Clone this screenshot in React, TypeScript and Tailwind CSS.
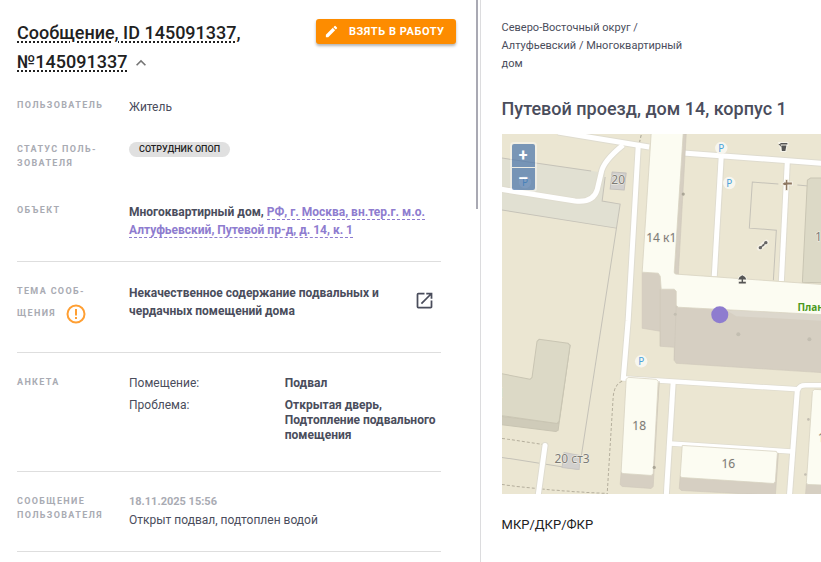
import type { ReactNode } from "react";
import { MdEdit, MdKeyboardArrowUp, MdOpenInNew } from "react-icons/md";

interface RowProps {
    label: ReactNode;
    children: ReactNode;
    className?: string;
}

function Row({ label, children, className = "" }: RowProps) {
    return (
        <div className={`grid grid-cols-[88px_1fr] gap-x-6 ${className}`}>
            <dt className="text-[9px] leading-[14px] font-bold uppercase tracking-[0.15em] text-[#a9abb3]">{label}</dt>
            <dd className="min-w-0">{children}</dd>
        </div>
    );
}

function WarningIcon() {
    return (
        <svg viewBox="0 0 20 20" className="my-1.5 ml-2.5 inline-block h-5 w-5 align-middle" fill="none" stroke="#ff9f33" strokeWidth="2" aria-hidden="true">
            <circle cx="10" cy="10" r="8.500" />
            <path d="M10 5V11.500M10 13V15" />
        </svg>
    );
}

const parkings = [
    [219, 14],
    [227, 49],
    [139, 227],
    [23, 48],
];

const mapLabels = [
    { x: 116, y: 50, text: "20" },
    { x: 159, y: 108, text: "14 к1" },
    { x: 137, y: 296, text: "18" },
    { x: 226, y: 334, text: "16" },
    { x: 70, y: 329, text: "20 ст3" },
    { x: 316, y: 107, text: "1" },
    { x: 319, y: 308, text: "1" },
    { x: -1, y: 263, text: "1" },
];

function MapCanvas() {
    return (
        <svg viewBox="0 0 319 360" preserveAspectRatio="xMinYMin slice" className="block h-full w-full" role="img" aria-label="Карта">
            <rect width="900" height="600" fill="#ebe6d2" />
            <path d="M0 24L90 37L103 39L100 67L118 70L114 94L0 76Z" fill="#e1e0d2" />

            {/* fences */}
            <g fill="none" stroke="#c5c2b8" strokeWidth="1">
                <path d="M0 24L89 37" />
                <path d="M103 43L100 67L118 70L79 323" />
                <path d="M0 76L114 94" />
                <path d="M0 323L77 335" />
                <path d="M276 50L250 48L247 94L274 96L271 146" />
                <path d="M295 51L306 52" />
                <path d="M139 1L137 10" strokeDasharray="3 2" stroke="#a9a595" />
            </g>

            {/* footpaths */}
            <g fill="none" stroke="#b5af9d" strokeWidth="1" strokeDasharray="3 2">
                <path d="M0 304L41 310" />
                <path d="M0 350C20 353 60 357 105 359" />
                <path d="M120 247Q112 250 111 263L105 360" />
            </g>

            {/* roads: grey casing under white */}
            <g fill="none" stroke="#dfdccf" strokeLinejoin="round">
                <path d="M56 -2L147 13" strokeWidth="7" />
                <path d="M-2 55L73 67Q91 69 95 56L99 39Q101 27 121 11" strokeWidth="7" />
                <path d="M136 14L126 186L121 246" strokeWidth="7" />
                <path d="M121 244L296 255Q297 251 303 251L330 251" strokeWidth="6" />
                <path d="M171 249L164 362" strokeWidth="7" />
                <path d="M295 256L287 362" strokeWidth="7" />
                <path d="M168 309L289 317" strokeWidth="6" />
                <path d="M43 311L36 362" strokeWidth="7" strokeLinecap="round" />
                <path d="M181 19L330 30" strokeWidth="7" />
                <path d="M219 23L212 142" strokeWidth="7" />
                <path d="M285 28L279 147" strokeWidth="7" />
            </g>
            <g fill="none" stroke="#fff" strokeLinejoin="round">
                <path d="M56 -2L147 13" strokeWidth="5" />
                <path d="M-2 55L73 67Q91 69 95 56L99 39Q101 27 121 11" strokeWidth="5" />
                <path d="M136 13L126 186L121 246" strokeWidth="5" />
                <path d="M120 244L296 255Q297 251 303 251L330 251" strokeWidth="4.500" />
                <path d="M171 247L164 362" strokeWidth="5" />
                <path d="M295 255L287 362" strokeWidth="5" />
                <path d="M168 309L289 317" strokeWidth="4.500" />
                <path d="M43 311L36 362" strokeWidth="5" strokeLinecap="round" />
                <path d="M181 19L330 30" strokeWidth="5" />
                <path d="M219 21L212 142" strokeWidth="5" />
                <path d="M285 26L279 147" strokeWidth="5" />
            </g>

            {/* building shadows */}
            <g fill="#d6cfc2" stroke="#cfc8ba" strokeWidth="0.6" strokeLinejoin="round">
                <path d="M140 138L158 138L174 150L330 170L330 239L174 229L172 226L172 213L158 212L158 197L140 194Z" />
                <path d="M180 0L184 0L176 142L172 141Z" />
                <path d="M119 337L118 350L120 352L149 354L151 352L157 247L150 341Z" />
                <path d="M178 341L177 354L179 356L273 361L276 319Z" />
                <path d="M304 349L303 362L330 362L330 350Z" />
            </g>
            <path d="M158 155L158 212M174 171L172 226" stroke="#cdc6b8" strokeWidth="0.6" />
            <path d="M224 176L234 182L330 187L330 178Z" fill="#dcd7cc" />

            {/* residential buildings */}
            <g fill="#fcfcf2" stroke="#d8d3c2" strokeWidth="0.8" strokeLinejoin="round">
                <path d="M149 -1L181 -1L172 138Q172 140 175 140L330 151L330 181L176 173L174 171L174 157L172 155L159 155L158 142L156 139L140 138Z" />
                <path d="M126 243L154 245L156 247L151 339L149 341L120 339L119 337L124 245Z" />
                <path d="M180 311L274 317L275 319L273 347L271 349L179 343L178 341Z" />
                <path d="M312 255L330 256L330 351L305 350L304 348L310 257Z" />
            </g>

            {/* other buildings */}
            <g strokeWidth="1" strokeLinejoin="round">
                <path d="M-2 282L56 289L68 211L56 296L54 297L-2 290Z" fill="#cfcbb9" stroke="#c8c4b2" />
                <path d="M-2 239L28 245L30 243L35 207L37 205L66 209L68 211L57 287L55 289L-2 281Z" fill="#dcd9c6" stroke="#c9c5b3" />
                <path d="M308 44L330 44L330 149L300 148L305 46Z" fill="#dcd9c6" stroke="#c9c5b3" />
                <path d="M110 38L124 39L122 56L108 55Z" fill="#d2d0ce" stroke="#c4c1bd" />
                <path d="M62 318L78 321L77 335L60 333Z" fill="#d2d0ce" stroke="#c9c6c2" />
            </g>

            {/* entrances */}
            <g fill="#c3beb1">
                <circle cx="236" cy="200" r="2" />
                <circle cx="307" cy="205" r="2" />
                <circle cx="173" cy="180" r="1.500" />
                <circle cx="181" cy="60" r="1.600" fill="#aaa596" />
                <circle cx="152" cy="333" r="1.600" fill="#aaa596" />
                <circle cx="306" cy="285" r="1.300" />
                <circle cx="303" cy="340" r="1.300" />
            </g>

            {parkings.map(([x, y]) => (
                <g key={`${x}-${y}`}>
                    <circle cx={x} cy={y} r="6.200" fill="#f7f6ef" />
                    <text x={x} y={y + 4} textAnchor="middle" fontSize="10" fontFamily="Noto Sans, sans-serif" fill="#4ba3dc">P</text>
                </g>
            ))}

            {/* waste bin */}
            <path d="M277 9h8v2h-1l-1 6h-4l-1-5z" stroke="#f6f4ea" strokeWidth="2" fill="#f6f4ea" />
            <path d="M278 9h7v1.500h-7zM279 11.500h5l-1 5.500h-3.500zM276 10h2l1 3z" fill="#555" />
            {/* shelter */}
            <path d="M236 145.200Q236.500 142.500 240 141Q243.500 142.500 244 145.200ZM239.300 145h1.400v3h-1.400zM236.500 147.500h7v1.700h-7z" fill="#555" stroke="#f6f4ea" strokeWidth="1.500" paintOrder="stroke" />
            {/* signpost */}
            <path d="M283.500 46h1.400v10h-1.400zM280 50l2-1.500h3V51h-3zM285 48.500h4.500v2h-4.500z" fill="#8d7762" stroke="#f5f1e7" strokeWidth="2" paintOrder="stroke" />
            {/* seesaw */}
            <path d="M257 114L264 108" stroke="#f5f1e7" strokeWidth="5" strokeLinecap="round" />
            <path d="M257.500 114L264 108" stroke="#666" strokeWidth="1.300" strokeLinecap="round" />
            <g fill="#666">
                <circle cx="258" cy="113.500" r="1.700" />
                <circle cx="261" cy="111" r="1" />
                <circle cx="263.500" cy="108.500" r="1.700" />
            </g>

            <g fontFamily="Noto Sans, sans-serif" fontSize="12" fill="#7d7b76" textAnchor="middle" stroke="#f4f2e8" strokeWidth="1" paintOrder="stroke">
                {mapLabels.map((l) => (
                    <text key={`${l.x}-${l.y}`} x={l.x} y={l.y}>{l.text}</text>
                ))}
            </g>
            <text x="295" y="177" fontFamily="Noto Sans, sans-serif" fontSize="10" fontWeight="700" fill="#4c9a1f">Планета</text>

            <circle cx="217.500" cy="180.500" r="8.500" fill="#8e7ccf" />
        </svg>
    );
}

export default function App() {
    return (
        <main className="grid min-h-screen grid-cols-[24fr_17fr] overflow-hidden bg-white font-['Roboto','Noto_Sans',sans-serif] text-[12px] leading-[18px] text-[#4a4d5c]">
            <section className="relative min-w-0 border-r border-[#dcdcde] pl-[17px] pr-6 pt-[18px]">
                <div className="absolute right-0.5 top-0 h-[209px] w-0.5 bg-[#a9a9b3]" />

                <header className="flex items-start justify-between">
                    <h1 className="flex-1 text-[18px] leading-[29px] font-medium text-[#212121]">
                        <span className="underline decoration-dotted decoration-2 underline-offset-2">
                            Сообщение, ID 145091337, №145091337
                        </span>
                        <button type="button" aria-label="Свернуть" className="ml-1 inline-block align-middle text-[#757575]">
                            <MdKeyboardArrowUp size={20} />
                        </button>
                    </h1>
                    <button
                        type="button"
                        className="mt-px flex h-[25px] shrink-0 items-center gap-2.5 rounded-[3px] bg-[#fd8c00] pl-2 pr-[11px] text-[11px] font-bold uppercase tracking-wider text-white shadow-[0_2px_3px_rgba(0,0,0,0.3)]"
                    >
                        <MdEdit size={15} /> Взять в работу
                    </button>
                </header>

                <dl className="mr-[15px] mt-[22px]">
                    <Row label="Пользователь" className="pb-[26px]">Житель</Row>
                    <Row label={<>Статус поль&shy;зователя</>} className="pb-[33px]">
                        <span className="block w-fit rounded-full bg-[#e0e0e0] px-2.5 text-[9px] leading-[15px] font-medium uppercase text-[#212121]">
                            Сотрудник ОПОП
                        </span>
                    </Row>
                    <Row label="Объект" className="pb-[22px]">
                        <p className="font-bold">
                            Многоквартирный дом,{" "}
                            <a href="#object" className="border-b border-dashed border-[#8e7ccf] text-[#8e7ccf]">
                                РФ, г. Москва, вн.тер.г. м.о. Алтуфьевский, Путевой пр-д, д. 14, к. 1
                            </a>
                        </p>
                    </Row>
                    <Row
                        label={
                            <>
                                Тема сооб&shy;щения
                                <WarningIcon />
                            </>
                        }
                        className="border-t border-[#dedede] py-[22px]"
                    >
                        <div className="flex items-start justify-between">
                            <p className="max-w-[272px] font-bold">Некачественное содержание подвальных и чердачных помещений дома</p>
                            <a href="#topic" aria-label="Открыть" className="mr-1.5 mt-1.5">
                                <MdOpenInNew size={21} />
                            </a>
                        </div>
                    </Row>
                    <Row label="Анкета" className="border-t border-[#dedede] py-[22px]">
                        <table className="mt-px w-full text-left leading-[15px]">
                            <tbody>
                                <tr className="align-top">
                                    <th className="w-1/2 pb-[7px] font-normal">Помещение:</th>
                                    <td className="pb-[7px] font-bold">Подвал</td>
                                </tr>
                                <tr className="align-top">
                                    <th className="pb-1.5 font-normal">Проблема:</th>
                                    <td className="pb-1.5 font-bold">Открытая дверь, Подтопление подвального помещения</td>
                                </tr>
                            </tbody>
                        </table>
                    </Row>
                    <Row label="Сообщение пользователя" className="border-y border-[#dedede] py-[22px]">
                        <time className="mb-0.5 block text-[11px] leading-[15px] font-bold text-[#a9abb3]">18.11.2025 15:56</time>
                        <p>Открыт подвал, подтоплен водой</p>
                    </Row>
                </dl>
            </section>

            <section className="min-w-0 pl-[21px] pt-[19px]">
                <nav className="max-w-[200px] text-[11px] leading-[18px]">
                    Северо-Восточный округ / Алтуфьевский / Многоквартирный дом
                </nav>
                <h2 className="mt-[23px] whitespace-nowrap text-[18px] leading-[26px] font-medium">Путевой проезд, дом 14, корпус 1</h2>
                <div className="relative mt-3 h-[360px] overflow-hidden">
                    <MapCanvas />
                    <div className="absolute left-2 top-2 flex flex-col gap-px rounded bg-white/40 p-0.5 text-[16px] leading-[22px] font-bold text-white">
                        <button type="button" aria-label="Приблизить" className="h-[23px] w-[23px] rounded-t-xs bg-[#003c88]/50">+</button>
                        <button type="button" aria-label="Отдалить" className="h-[22px] w-[23px] rounded-b-xs bg-[#003c88]/50">–</button>
                    </div>
                </div>
                <h3 className="mt-[22px] text-[13px] leading-[18px] font-normal text-[#212121]">МКР/ДКР/ФКР</h3>
            </section>
        </main>
    );
}
